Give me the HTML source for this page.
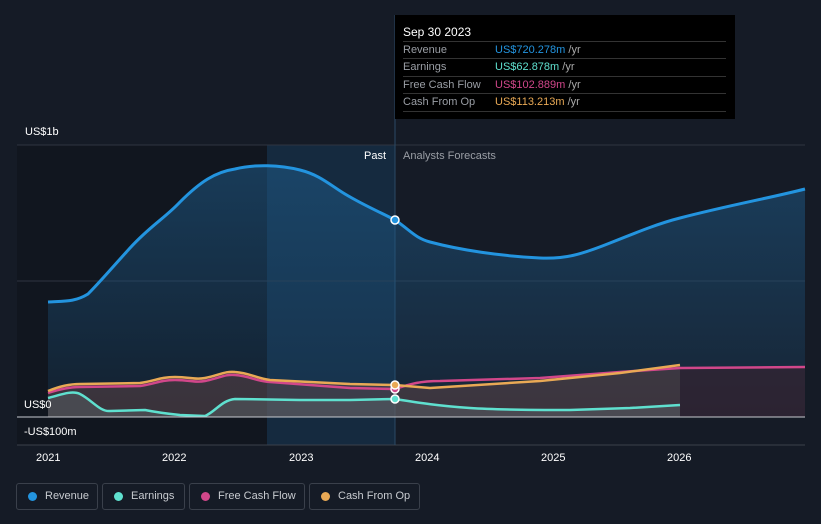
<!DOCTYPE html>
<html><head><style>
body{margin:0;width:821px;height:524px;background:#151b26;font-family:"Liberation Sans",sans-serif;overflow:hidden;position:relative}
.t{position:absolute;font-size:11px;color:#fff}
.leg{position:absolute;top:483px;height:27px;border:1px solid #3a404b;border-radius:3px;box-sizing:border-box;color:#c8cbd0;font-size:12px;line-height:25px;padding-left:28px}
.leg i{position:absolute;left:11px;top:8px;width:9px;height:9px;border-radius:50%}
</style></head><body>
<svg width="821" height="524" style="position:absolute;left:0;top:0">
<defs>
<linearGradient id="rg" x1="0" y1="0" x2="0" y2="1"><stop offset="0" stop-color="#1e5a88" stop-opacity=".55"/><stop offset="1" stop-color="#1e5a88" stop-opacity=".15"/></linearGradient>
</defs>
<rect x="17" y="145" width="378" height="300" fill="#11161f"/>
<rect x="267" y="145" width="128" height="300" fill="#173047" opacity=".8"/>
<line x1="17" y1="145" x2="805" y2="145" stroke="#2e3440"/>
<line x1="17" y1="281" x2="805" y2="281" stroke="#2e3440"/>
<line x1="17" y1="445" x2="805" y2="445" stroke="#3a404b"/>
<line x1="395" y1="15" x2="395" y2="445" stroke="#2a4a66"/>
<path d="M48,302 C65,301 75,302 88,294 C100,282 110,270 130,248 C150,226 165,218 180,202 C200,182 215,172 235,169 C255,164 280,165 300,170 C320,175 330,185 345,194 C365,206 380,212 395,220 C410,230 415,238 430,242 C460,250 500,256 540,258 C565,259 580,255 610,243 C640,231 660,223 680,218 C730,205 770,198 805,189 L805,417 L48,417Z" fill="url(#rg)"/>
<path d="M48,302 C65,301 75,302 88,294 C100,282 110,270 130,248 C150,226 165,218 180,202 C200,182 215,172 235,169 C255,164 280,165 300,170 C320,175 330,185 345,194 C365,206 380,212 395,220 C410,230 415,238 430,242 C460,250 500,256 540,258 C565,259 580,255 610,243 C640,231 660,223 680,218 C730,205 770,198 805,189" fill="none" stroke="#2394df" stroke-width="3"/>
<path d="M48,391 C60,386 70,384 80,384 L140,383 C155,381 160,377 175,377 C190,377 195,380 205,378 C220,375 225,371 235,372 C250,373 255,378 270,380 L350,384 L395,385 L430,388 L540,381 L620,373 L680,365 L680,417 L48,417Z" fill="#6b4a4a" opacity=".45"/>
<path d="M680,367 L805,366 L805,417 L680,417Z" fill="#3a2330" opacity=".6"/>
<path d="M48,398 C60,395 72,390 80,394 C92,400 100,412 110,411 L145,410 C160,413 170,414 180,415 L205,416 C215,412 222,400 235,399 L300,400 L350,400 L395,399 C420,403 440,406 470,408 C500,410 540,410 570,410 L630,408 L680,405 L680,417 L48,417Z" fill="#5e6b70" opacity=".4"/>
<path d="M48,393 C60,389 70,387 80,387 L140,386 C155,384 160,380 175,380 C190,380 195,383 205,381 C220,378 225,374 235,375 C250,376 255,381 270,382 L350,388 L395,389 C410,384 420,381 440,381 L540,378 L620,372 L680,368 L805,367" fill="none" stroke="#d1478a" stroke-width="2.5"/>
<path d="M48,391 C60,386 70,384 80,384 L140,383 C155,381 160,377 175,377 C190,377 195,380 205,378 C220,375 225,371 235,372 C250,373 255,378 270,380 L350,384 L395,385 L430,388 L540,381 L620,373 L680,365" fill="none" stroke="#e9a955" stroke-width="2.5"/>
<path d="M48,398 C60,395 72,390 80,394 C92,400 100,412 110,411 L145,410 C160,413 170,414 180,415 L205,416 C215,412 222,400 235,399 L300,400 L350,400 L395,399 C420,403 440,406 470,408 C500,410 540,410 570,410 L630,408 L680,405" fill="none" stroke="#5fe0cf" stroke-width="2.5"/>
<line x1="17" y1="417" x2="805" y2="417" stroke="#c8cbd0" stroke-width="1"/>
<circle cx="395" cy="220" r="4" fill="#2394df" stroke="#fff" stroke-width="1.5"/>
<circle cx="395" cy="389" r="4" fill="#d1478a" stroke="#fff" stroke-width="1.5"/>
<circle cx="395" cy="385" r="4" fill="#e9a955" stroke="#fff" stroke-width="1.5"/>
<circle cx="395" cy="399" r="4" fill="#5fe0cf" stroke="#fff" stroke-width="1.5"/>
</svg>
<div style="position:absolute;left:395px;top:15px;width:340px;height:104px;background:#000"></div>
<div class="t" style="left:403px;top:25px;font-size:12px">Sep 30 2023</div>
<div style="position:absolute;left:403px;top:41px;width:323px;border-top:1px solid #333"></div>
<div style="position:absolute;left:403px;top:58px;width:323px;border-top:1px solid #333"></div>
<div style="position:absolute;left:403px;top:76px;width:323px;border-top:1px solid #333"></div>
<div style="position:absolute;left:403px;top:93px;width:323px;border-top:1px solid #333"></div>
<div style="position:absolute;left:403px;top:111px;width:323px;border-top:1px solid #333"></div>
<div class="t" style="left:403px;top:44px;color:#9a9ea5">Revenue</div><div class="t" style="left:495px;top:44px;color:#2394df">US$720.278m <span style="color:#aaa">/yr</span></div>
<div class="t" style="left:403px;top:61px;color:#9a9ea5">Earnings</div><div class="t" style="left:495px;top:61px;color:#5fe0cf">US$62.878m <span style="color:#aaa">/yr</span></div>
<div class="t" style="left:403px;top:79px;color:#9a9ea5">Free Cash Flow</div><div class="t" style="left:495px;top:79px;color:#d1478a">US$102.889m <span style="color:#aaa">/yr</span></div>
<div class="t" style="left:403px;top:96px;color:#9a9ea5">Cash From Op</div><div class="t" style="left:495px;top:96px;color:#e9a955">US$113.213m <span style="color:#aaa">/yr</span></div>
<div class="t" style="left:364px;top:150px">Past</div>
<div class="t" style="left:403px;top:150px;color:#9a9ea5">Analysts Forecasts</div>
<div class="t" style="left:25px;top:126px">US$1b</div>
<div class="t" style="left:24px;top:399px">US$0</div>
<div class="t" style="left:24px;top:426px">-US$100m</div>
<div class="t" style="left:36px;top:452px">2021</div>
<div class="t" style="left:162px;top:452px">2022</div>
<div class="t" style="left:289px;top:452px">2023</div>
<div class="t" style="left:415px;top:452px">2024</div>
<div class="t" style="left:541px;top:452px">2025</div>
<div class="t" style="left:667px;top:452px">2026</div>
<div class="leg" style="left:16px;width:82px;font-size:11px"><i style="background:#2394df"></i>Revenue</div>
<div class="leg" style="left:102px;width:83px;font-size:11px"><i style="background:#5fe0cf"></i>Earnings</div>
<div class="leg" style="left:189px;width:116px;font-size:11px"><i style="background:#d1478a"></i>Free Cash Flow</div>
<div class="leg" style="left:309px;width:111px;font-size:11px"><i style="background:#e9a955"></i>Cash From Op</div>
</body></html>
